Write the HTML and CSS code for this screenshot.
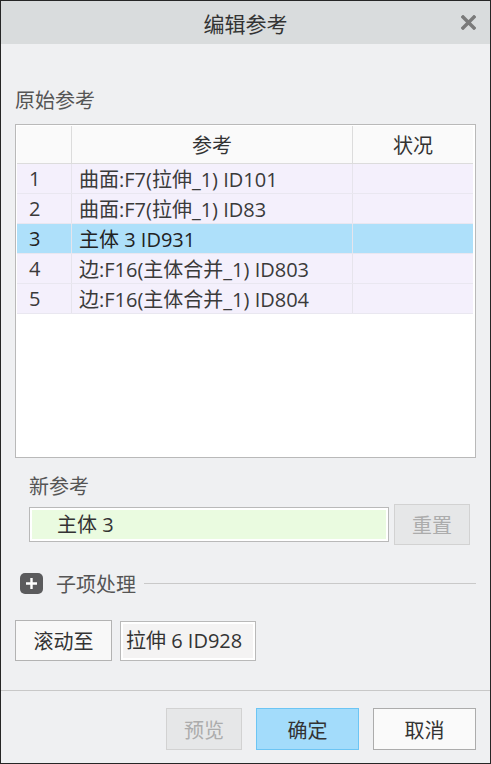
FILE: index.html
```html
<!DOCTYPE html>
<html lang="zh-CN">
<head>
    <meta charset="UTF-8">
    <meta name="viewport" content="width=device-width, initial-scale=1.0">
    <title>编辑参考</title>
    <link rel="stylesheet" href="styles.css">
</head>
<body>
    <div class="dialog">
        <div class="titlebar">
            <span></span>
            <span class="title">编辑参考</span>
            <button class="close" aria-label="关闭">
                <svg width="15" height="15" viewBox="0 0 15 15">
                    <path d="M2 2 L13 13 M13 2 L2 13" stroke="#7a7a7a" stroke-width="3.4" stroke-linecap="square"/>
                </svg>
            </button>
        </div>

        <div class="content">
            <div class="label">原始参考</div>
            <div class="ref-table">
                <table>
                    <thead>
                        <tr>
                            <th class="col-num"></th>
                            <th class="col-ref">参考</th>
                            <th class="col-state">状况</th>
                        </tr>
                    </thead>
                    <tbody>
                        <tr><td class="num">1</td><td>曲面:F7(拉伸_1) ID101</td><td></td></tr>
                        <tr><td class="num">2</td><td>曲面:F7(拉伸_1) ID83</td><td></td></tr>
                        <tr class="selected"><td class="num">3</td><td>主体 3 ID931</td><td></td></tr>
                        <tr><td class="num">4</td><td>边:F16(主体合并_1) ID803</td><td></td></tr>
                        <tr><td class="num">5</td><td>边:F16(主体合并_1) ID804</td><td></td></tr>
                    </tbody>
                </table>
            </div>

            <div class="label indent new-label">新参考</div>
            <div class="new-ref">
                <div class="ref-input"><span>主体 3</span></div>
                <button class="btn disabled reset">重置</button>
            </div>

            <div class="children">
                <svg class="expand" width="23" height="21" viewBox="0 0 23 21">
                    <rect x="0" y="0" width="23" height="21" rx="5" fill="#5b5b5d"/>
                    <path d="M6 10.5 H17 M11.5 5 V16" stroke="#ffffff" stroke-width="2.4"/>
                </svg>
                <span class="children-text">子项处理</span>
                <span class="rule"></span>
            </div>

            <div class="scroll-row">
                <button class="btn scroll-btn">滚动至</button>
                <div class="scroll-target"><span>拉伸 6 ID928</span></div>
            </div>
        </div>

        <div class="footer">
            <button class="btn disabled preview">预览</button>
            <button class="btn primary">确定</button>
            <button class="btn cancel">取消</button>
        </div>
    </div>
</body>
</html>
```

FILE: styles.css
```css
body {
    margin: 0;
    font-family: "Open Sans", "Noto Sans CJK SC", sans-serif;
    color: #333;
}

.dialog {
    width: 491px;
    height: 764px;
    box-sizing: border-box;
    border: 1px solid #262626;
    background-color: #eff0f2;
    display: flex;
    flex-direction: column;
}

.titlebar {
    height: 43px;
    background-color: #d9dcdd;
    display: grid;
    grid-template-columns: 1fr auto 1fr;
    align-items: center;
}

.title {
    font-size: 21px;
    color: #333;
}

.close {
    justify-self: end;
    margin-right: 14px;
    padding: 0;
    border: none;
    background: none;
    display: flex;
}

.content {
    padding: 0 14px 0 14px;
    display: flex;
    flex-direction: column;
}

.label {
    font-size: 20px;
    line-height: 24px;
    color: #555;
    margin-top: 45px;
}

.indent {
    padding-left: 14px;
}

.new-label {
    margin-top: 17px;
}

.ref-table {
    margin-top: 11px;
    height: 334px;
    box-sizing: border-box;
    border: 1px solid #b9b9b9;
    background-color: #ffffff;
    padding: 1px 3px 0 1px;
}

table {
    width: 456px;
    border-collapse: collapse;
    font-size: 20px;
    color: #3a3a3a;
}

th {
    height: 37px;
    padding: 0;
    font-weight: normal;
    background-color: #fafafa;
    border-bottom: 1px solid #dcdcdc;
    border-left: 1px solid #dcdcdc;
    color: #333;
}

th:first-child {
    border-left: none;
}

.col-num {
    width: 54px;
}

.col-state {
    width: 120px;
}

td {
    height: 29px;
    padding: 0 0 0 7px;
    background-color: #f4f0fc;
    border-bottom: 1px solid #e9e7f0;
    border-left: 1px solid #e6e4ec;
    white-space: nowrap;
}

td:first-child {
    border-left: none;
}

td.num {
    padding-left: 12px;
}

tr.selected td {
    background-color: #aee0fa;
    color: #222;
}

.new-ref {
    margin-top: 5px;
    padding-left: 14px;
    display: flex;
    align-items: center;
    gap: 5px;
}

.ref-input {
    width: 360px;
    height: 35px;
    box-sizing: border-box;
    border: 1px solid #b9b9b9;
    background-color: #ffffff;
    padding: 2px;
    display: flex;
}

.ref-input span {
    flex: 1;
    background-color: #eafbe0;
    font-size: 20px;
    line-height: 29px;
    padding-left: 25px;
    color: #333;
}

.btn {
    box-sizing: border-box;
    height: 42px;
    border: 1px solid #b3b3b3;
    background-color: #f8f8f8;
    font-family: "Open Sans", "Noto Sans CJK SC", sans-serif;
    font-size: 20px;
    color: #333;
    padding: 0;
}

.btn.disabled {
    background-color: #e6e7e8;
    border-color: #d2d2d2;
    color: #acacac;
}

.reset {
    width: 76px;
    height: 41px;
}

.children {
    margin-top: 26px;
    padding-left: 5px;
    display: flex;
    align-items: center;
    height: 24px;
}

.children-text {
    margin-left: 13px;
    font-size: 20px;
    color: #555;
}

.rule {
    flex: 1;
    margin-left: 8px;
    border-top: 1px solid #c9c9c9;
}

.scroll-row {
    margin-top: 25px;
    display: flex;
    align-items: center;
    gap: 8px;
}

.scroll-btn {
    width: 97px;
    height: 41px;
}

.scroll-target {
    width: 136px;
    height: 40px;
    box-sizing: border-box;
    border: 1px solid #b9b9b9;
    background-color: #ffffff;
    padding: 2px;
    display: flex;
}

.scroll-target span {
    flex: 1;
    background-color: #f4f3f3;
    font-size: 20px;
    line-height: 34px;
    padding-left: 3px;
    color: #333;
    white-space: nowrap;
}

.footer {
    margin-top: auto;
    border-top: 1px solid #c8c8c8;
    padding: 17px 14px 13px 0;
    display: flex;
    justify-content: flex-end;
    gap: 14px;
}

.preview {
    width: 76px;
}

.primary {
    width: 103px;
    background-color: #a3dcfb;
    border-color: #6cc5f4;
}

.cancel {
    width: 103px;
    background-color: #fafafa;
    border-color: #acacac;
}
```
